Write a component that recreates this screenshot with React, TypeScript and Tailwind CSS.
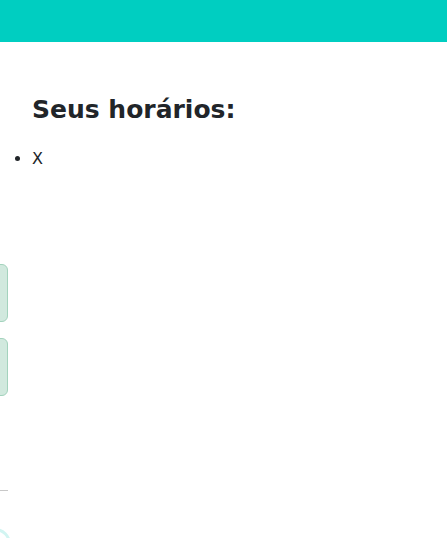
import React from "react";

const App = () => {
    return (
        <div className="h-screen bg-white font-['DejaVu_Sans',sans-serif] text-[#212529] overflow-hidden">
            <header className="h-[42px] bg-[#00cec1]"></header>
            <main className="pt-[53px]">
                <h2 className="pl-8 text-[25px] font-bold leading-[30px]">Seus horários:</h2>
                <ul className="list-disc pl-8 mt-[22px] text-base leading-6">
                    <li>X</li>
                </ul>
                <div className="mt-[93px] flex flex-col gap-4">
                    <div className="w-[200px] -ml-[192px] h-[58px] rounded-md border border-[#a3d3bd] bg-[#d1e9de]"></div>
                    <div className="w-[200px] -ml-[192px] h-[58px] rounded-md border border-[#a3d3bd] bg-[#d1e9de]"></div>
                </div>
                <hr className="mt-[94px] w-2 border-t border-[#c8c8c8]" />
                <div className="mt-[37px] -ml-[21px] w-8 h-8 rounded-full border-[3px] border-[#d2f5f2]"></div>
            </main>
        </div>
    );
};

export default App;
